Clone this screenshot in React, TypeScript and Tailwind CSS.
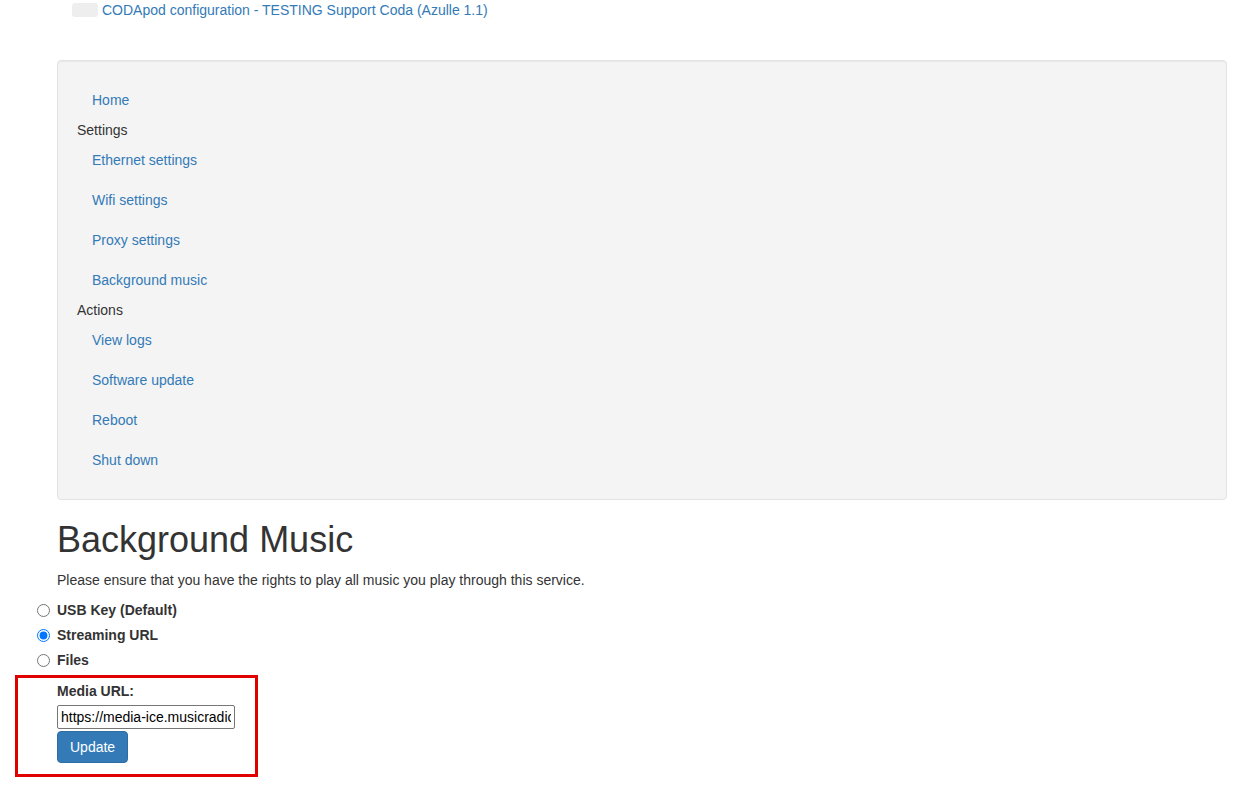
const navGroups = [
  { heading: null, links: ['Home'] },
  {
    heading: 'Settings',
    links: ['Ethernet settings', 'Wifi settings', 'Proxy settings', 'Background music'],
  },
  { heading: 'Actions', links: ['View logs', 'Software update', 'Reboot', 'Shut down'] },
];

const sources = [
  { id: 'usb', label: 'USB Key (Default)', checked: false },
  { id: 'stream', label: 'Streaming URL', checked: true },
  { id: 'files', label: 'Files', checked: false },
];

export default function App() {
  return (
    <div
      className="min-h-screen bg-white text-[14px] leading-[20px] text-[#333]"
      style={{ fontFamily: '"Liberation Sans", Arial, sans-serif' }}
    >
      <div className="flex items-center h-[20px] pl-[72px]">
        <span className="inline-block w-[26px] h-[14px] rounded-[3px] bg-[#eeeeee] mr-[4px]" />
        <a href="#" className="text-[#337ab7]">
          CODApod configuration - TESTING Support Coda (Azulle 1.1)
        </a>
      </div>

      <div className="ml-[57px] mt-[40px] w-[1170px] min-h-[440px] bg-[#f4f4f4] border border-[#e3e3e3] rounded-[4px] shadow-[inset_0_1px_1px_rgba(0,0,0,0.05)] p-[19px]">
        <ul className="flex flex-col">
          {navGroups.map((group, i) => (
            <li key={i} className="flex flex-col">
              {group.heading && <span className="h-[20px] text-[#333]">{group.heading}</span>}
              {group.links.map((link) => (
                <a key={link} href="#" className="block px-[15px] py-[10px] text-[#337ab7]">
                  {link}
                </a>
              ))}
            </li>
          ))}
        </ul>
      </div>

      <div className="ml-[57px] mt-[20px]">
        <h1 className="text-[36px] leading-[39.6px] font-normal text-[#333]">Background Music</h1>
        <p className="mt-[10px]">
          Please ensure that you have the rights to play all music you play through this service.
        </p>
      </div>

      <div className="mt-[8px] flex flex-col pl-[37px]">
        {sources.map((s) => (
          <label key={s.id} className="flex items-center h-[25px] font-bold text-[#333]">
            <input
              type="radio"
              name="source"
              defaultChecked={s.checked}
              className="w-[13px] h-[13px] m-0 mr-[7px]"
            />
            {s.label}
          </label>
        ))}
      </div>

      <div className="ml-[15px] mt-[2px] w-[243px] h-[102px] border-[3px] border-[#e00000] pl-[39px] pt-[3px]">
        <div className="font-bold text-[#333] h-[20px] leading-[20px]">Media URL:</div>
        <input
          type="text"
          defaultValue="https://media-ice.musicradio.com/CapitalMP3"
          className="mt-[4px] block w-[178px] h-[24px] border border-[#767676] rounded-[2px] px-[3px] text-[14px] text-black bg-white"
        />
        <button className="mt-[2px] block h-[32px] px-[12px] bg-[#337ab7] border border-[#2e6da4] rounded-[4px] text-white text-[14px]">
          Update
        </button>
      </div>
    </div>
  );
}
